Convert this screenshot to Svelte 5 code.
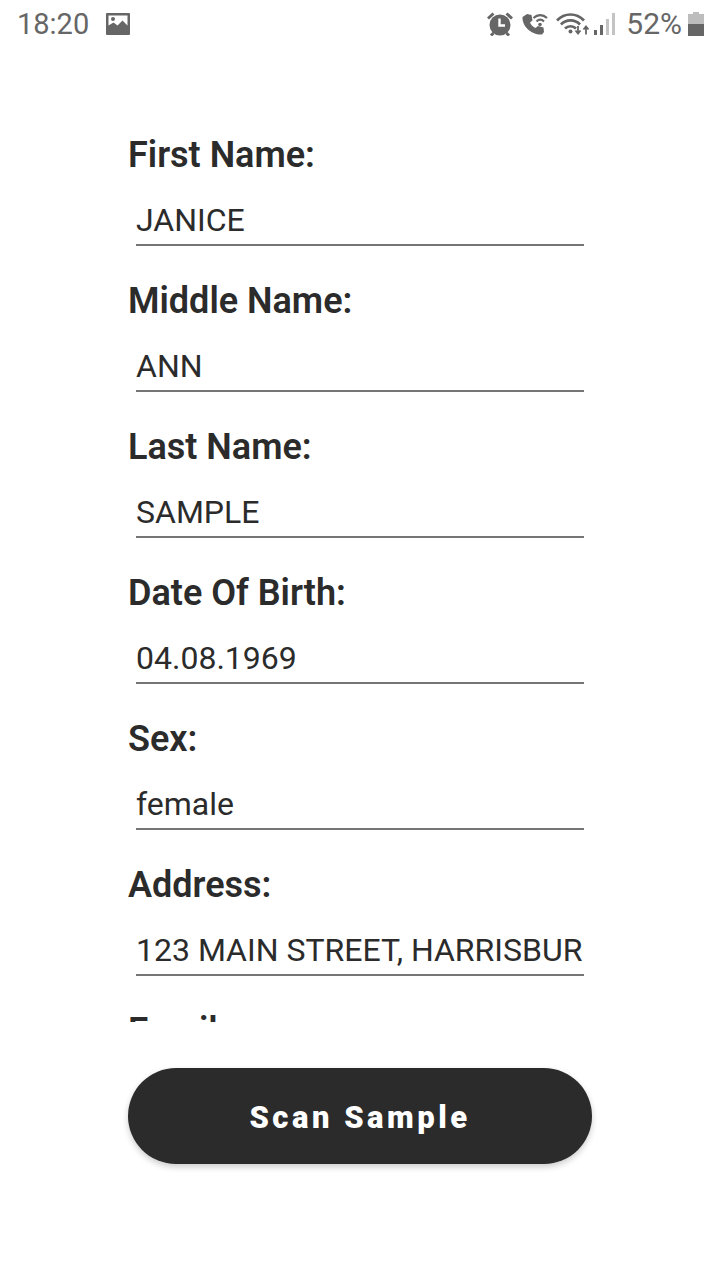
<script>
	const fields = [
		{ label: 'First Name:', value: 'JANICE' },
		{ label: 'Middle Name:', value: 'ANN' },
		{ label: 'Last Name:', value: 'SAMPLE' },
		{ label: 'Date Of Birth:', value: '04.08.1969' },
		{ label: 'Sex:', value: 'female' },
		{ label: 'Address:', value: '123 MAIN STREET, HARRISBURG, PA 17101' },
		{ label: 'Email:', value: '' }
	];
</script>

<div class="screen">
	<header class="status">
		<span class="time">18:20</span>
		<svg class="pic" width="24" height="22" viewBox="0 0 24 22">
			<path fill="#666" fill-rule="evenodd" d="M1 0h22a1 1 0 0 1 1 1v20a1 1 0 0 1-1 1H1a1 1 0 0 1-1-1V1a1 1 0 0 1 1-1zM2.500 2.500v10l5-3 4 3 5-5 5 5v-10z" />
			<circle cx="7" cy="6" r="2" fill="#666" />
		</svg>
		<span class="spacer"></span>
		<svg class="alarm" width="26" height="24" viewBox="0 0 26 24">
			<circle cx="13" cy="13" r="10.500" fill="#666" />
			<path d="M12.500 6.500v7h5.500" fill="none" stroke="#fff" stroke-width="2.400" />
			<path d="M1 6.500l5.500-5M25 6.500l-5.500-5M6.500 21l-2.500 2.500M19.500 21l2.500 2.500" stroke="#666" stroke-width="3" fill="none" />
		</svg>
		<svg class="call" width="26" height="22" viewBox="0 0 26 22">
			<path fill="#666" d="M5 1l4.500 1 1 5.500-2.500 2c1 2.500 3 4.500 5.500 5.500l2.500-2 5.500 1.500 .5 4.500-2 2.500C9 22 0 13 .5 4z" />
			<path d="M11.500 5c4-3.800 9.500-3.800 13.500 0M14.500 8.500c2.300-2.200 5.200-2.200 7.500 0" fill="none" stroke="#666" stroke-width="2.200" />
			<circle cx="18" cy="11.500" r="1.800" fill="#666" />
		</svg>
		<svg class="wifi" width="34" height="22" viewBox="0 0 34 22">
			<path d="M1 7.500c7.500-8 19.500-8 27 0M5 11.500c5-5.500 14-5.500 19 0M9 15.500c3-3 8-3 11 0" fill="none" stroke="#666" stroke-width="2.700" />
			<circle cx="14.500" cy="18.500" r="2" fill="#666" />
			<path d="M22 13v7.500M19.500 17.500l2.500 3 2.500-3M30 21.500v-7.500M27.500 16.500l2.500-3 2.500 3" fill="none" stroke="#666" stroke-width="1.800" />
		</svg>
		<svg class="signal" width="22" height="24" viewBox="0 0 22 24">
			<rect x="0" y="18" width="3" height="5" fill="#666" />
			<rect x="6" y="13" width="3" height="10" fill="#666" />
			<rect x="12" y="7" width="3" height="16" fill="#c4c4c4" />
			<rect x="18" y="1" width="3" height="22" fill="#c4c4c4" />
		</svg>
		<span class="percent">52%</span>
		<svg class="battery" width="16" height="24" viewBox="0 0 16 24">
			<path fill="#bdbdbd" d="M5 0h6v2h5v10H0V2h5z" />
			<rect x="0" y="12" width="16" height="12" fill="#666" />
		</svg>
	</header>

	<main class="scroller">
		<form class="form">
			{#each fields as field}
				<div class="field">
					<label for={field.label}>{field.label}</label>
					<input id={field.label} type="text" value={field.value} readonly />
				</div>
			{/each}
		</form>
	</main>

	<footer class="actions">
		<button type="button">Scan Sample</button>
	</footer>
</div>

<style>
	:global(body) {
		margin: 0;
		background: #fff;
	}

	.screen {
		display: flex;
		flex-direction: column;
		width: 720px;
		height: 1280px;
		background: #fff;
		font-family: Roboto, sans-serif;
		color: #2b2b2b;
		overflow: hidden;
	}

	.status {
		display: flex;
		align-items: center;
		flex: none;
		height: 48px;
		padding: 0 16px 0 17px;
		box-sizing: border-box;
		color: #666;
	}

	.time {
		font-size: 29px;
		line-height: 48px;
	}

	.pic {
		margin-left: 17px;
	}

	.spacer {
		flex: 1;
	}

	.call {
		margin-left: 9px;
	}

	.wifi {
		margin-left: 8px;
	}

	.signal {
		margin-left: 4px;
	}

	.percent {
		margin-left: 10px;
		font-size: 30px;
		line-height: 48px;
	}

	.battery {
		margin-left: 6px;
	}

	.scroller {
		flex: none;
		height: 974px;
		overflow: hidden;
	}

	.form {
		display: flex;
		flex-direction: column;
		gap: 29px;
		width: 464px;
		margin: 0 auto;
		padding-top: 81px;
	}

	.field {
		display: flex;
		flex-direction: column;
		gap: 13px;
	}

	label {
		font-size: 36px;
		font-weight: 600;
		line-height: 52px;
	}

	input {
		display: block;
		box-sizing: border-box;
		width: 448px;
		height: 52px;
		margin: 0 0 0 8px;
		padding: 2px 0 0;
		border: 0;
		border-bottom: 2px solid #757575;
		border-radius: 0;
		outline: 0;
		background: none;
		font: 400 32px/40px Roboto, sans-serif;
		color: #2b2b2b;
	}

	.actions {
		display: flex;
		justify-content: center;
		padding-top: 46px;
	}

	button {
		width: 464px;
		height: 96px;
		padding: 2px 0 0;
		border: 0;
		border-radius: 48px;
		background: #2b2b2b;
		box-shadow: 0 3px 6px rgba(0, 0, 0, 0.2);
		font: 900 31px Roboto, sans-serif;
		letter-spacing: 3.500px;
		color: #fff;
	}
</style>
